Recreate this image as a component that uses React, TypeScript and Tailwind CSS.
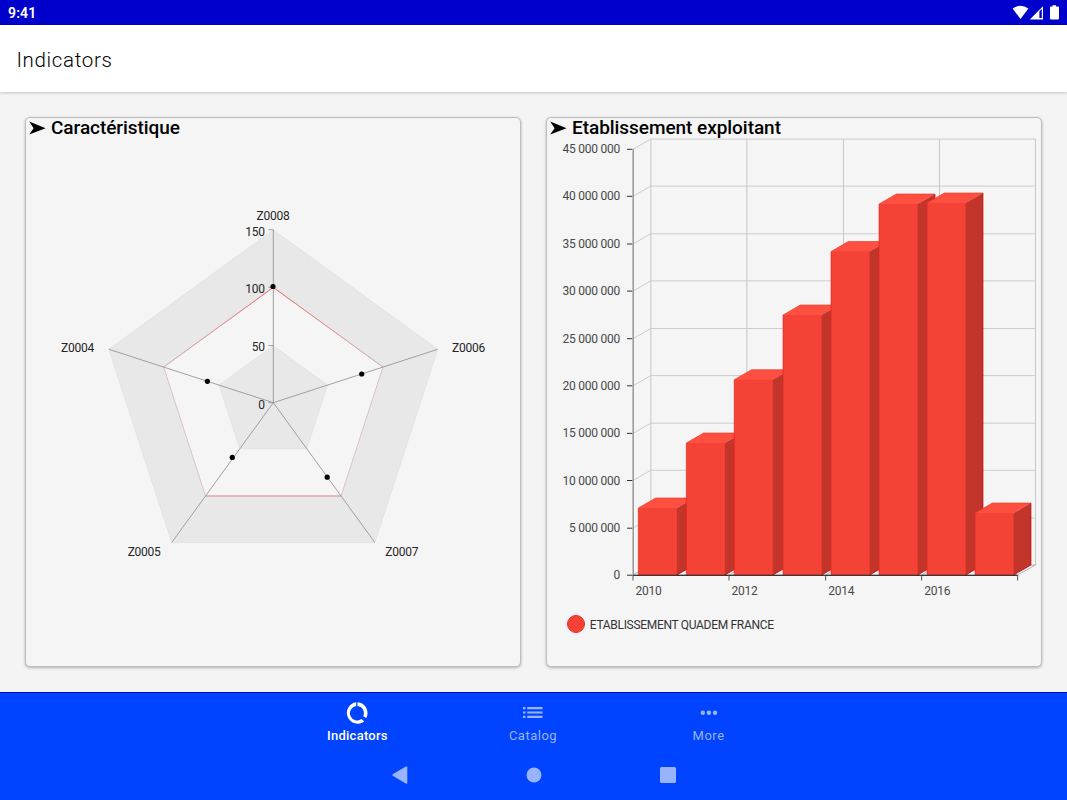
import React from "react";

const yAxis = [
  { label: "45 000 000", y: 149.3 },
  { label: "40 000 000", y: 196.3 },
  { label: "35 000 000", y: 244 },
  { label: "30 000 000", y: 291.1 },
  { label: "25 000 000", y: 338.7 },
  { label: "20 000 000", y: 385.8 },
  { label: "15 000 000", y: 433.4 },
  { label: "10 000 000", y: 480.5 },
  { label: "5 000 000", y: 528.2 },
  { label: "0", y: 575.2 },
];

const xAxis = [
  { label: "2010", x: 633 },
  { label: "2012", x: 729 },
  { label: "2014", x: 825.6 },
  { label: "2016", x: 921.6 },
  { label: "", x: 1017.6 },
];

const bars = [
  { x: 638.3, top: 508 },
  { x: 686.3, top: 443 },
  { x: 734.2, top: 379.7 },
  { x: 783, top: 315 },
  { x: 831, top: 251.5 },
  { x: 879, top: 204 },
  { x: 927, top: 203 },
  { x: 975, top: 513 },
];

const BAR_W = 38.6;
const DX = 17.3;
const DY = 10;
const BASE = 575;

const CX = 273.3;
const CY = 402.7;

function vertex(index: number, radius: number) {
  const a = ((-90 + index * 72) * Math.PI) / 180;
  return [CX + radius * Math.cos(a), CY + radius * Math.sin(a)];
}

function ring(radius: number) {
  return [0, 1, 2, 3, 4].map((i) => vertex(i, radius).join(",")).join(" ");
}

const radarLabels = [
  { text: "Z0008", x: 273, y: 219.8 },
  { text: "Z0006", x: 468.5, y: 352.3 },
  { text: "Z0007", x: 401.8, y: 556.3 },
  { text: "Z0005", x: 144.1, y: 556.3 },
  { text: "Z0004", x: 77.5, y: 352.3 },
];

const radarPoints = [
  [273, 286.5],
  [361.7, 374],
  [327.2, 477.2],
  [232.3, 457.4],
  [207.4, 381.3],
];

function Radar() {
  return (
    <svg
      width="494"
      height="528"
      viewBox="26 138 494 528"
      className="block text-[12px] tracking-[-0.25px]"
    >
      <polygon points={ring(172.8)} fill="#e8e8e8" stroke="#dedede" strokeWidth="0.7" />
      <polygon points={ring(115.3)} fill="#f5f5f5" stroke="#dcbcbc" strokeWidth="0.9" />
      <path
        d={`M${vertex(4, 115.3)} L${vertex(0, 115.3)} L${vertex(1, 115.3)}`}
        fill="none"
        stroke="url(#limit)"
        strokeWidth="0.9"
      />
      <path
        d={`M${vertex(2, 115.3)} L${vertex(3, 115.3)}`}
        stroke="#e09a9a"
        strokeWidth="1.2"
      />
      <defs>
        <linearGradient id="limit" gradientUnits="userSpaceOnUse" x1="0" y1="287" x2="0" y2="367">
          <stop offset="0" stopColor="#f06060" />
          <stop offset="1" stopColor="#d0b4b4" />
        </linearGradient>
      </defs>
      <polygon points={ring(56.9)} fill="#e8e8e8" stroke="#dedede" strokeWidth="0.7" />
      {[0, 1, 2, 3, 4].map((i) => {
        const [x, y] = vertex(i, 172.8);
        return <line key={i} x1={CX} y1={CY} x2={x} y2={y} stroke="#969696" strokeWidth="0.9" />;
      })}
      {[
        { t: "150", y: 229.7 },
        { t: "100", y: 287.3 },
        { t: "50", y: 345.5 },
        { t: "0", y: 402.7 },
      ].map((k) => (
        <g key={k.t}>
          <line x1="268.3" x2="273.3" y1={k.y} y2={k.y} stroke="#8c8c8c" strokeWidth="0.8" />
          <text x="264.7" y={k.y + 5.8} textAnchor="end" fill="#262626">
            {k.t}
          </text>
        </g>
      ))}
      {radarPoints.map(([x, y]) => (
        <circle key={x} cx={x} cy={y} r="2.6" fill="#000" />
      ))}
      {radarLabels.map((l) => (
        <text key={l.text} x={l.x} y={l.y} textAnchor="middle" fill="#262626">
          {l.text}
        </text>
      ))}
    </svg>
  );
}

function BarChart() {
  return (
    <svg
      width="494"
      height="472"
      viewBox="547 138 494 472"
      className="block text-[12px] tracking-[-0.25px]"
    >
      {yAxis.map((t) => (
        <g key={t.label}>
          {t.label !== "0" && (
            <path
              d={`M633 ${t.y}L650.7 ${t.y - 10.2}H1035.6`}
              fill="none"
              stroke="#cccccc"
              strokeWidth="1"
            />
          )}
          <line x1="627" x2="632.5" y1={t.y} y2={t.y} stroke="#333" strokeWidth="1" />
          <text x="620" y={t.y + 4} textAnchor="end" fill="#484848">
            {t.label}
          </text>
        </g>
      ))}
      {xAxis.map((t) => (
        <line
          key={t.x}
          x1={t.x + 17.9}
          x2={t.x + 17.9}
          y1="139"
          y2="565"
          stroke="#c8c8c8"
          strokeWidth="1"
        />
      ))}
      <path
        d="M633 575L650.7 565H1035.5L1017.6 575ZM729 575L746.7 565M825.6 575L843.4 565M921.6 575L939.4 565"
        fill="#f5f5f5"
        stroke="#aaa"
        strokeWidth="0.9"
      />
      <line x1="633.2" x2="633.2" y1="149" y2="575" stroke="#9c9c9c" strokeWidth="1.6" />
      {bars.map((b) => {
        const r = b.x + BAR_W;
        return (
          <g key={b.x}>
            <path
              d={`M${b.x} ${b.top + 1}V${b.top}L${b.x + DX} ${b.top - DY}H${r + DX}L${r} ${b.top}V${b.top + 1}Z`}
              fill="#ff4f41"
            />
            <path
              d={`M${b.x} ${b.top}L${b.x + DX} ${b.top - DY}H${r + DX}`}
              fill="none"
              stroke="#e8301f"
              strokeWidth="0.6"
            />
            <path
              d={`M${r - 1} ${b.top + 0.6}L${r + DX} ${b.top - DY}V${BASE - DY}L${r} ${BASE}H${r - 1}Z`}
              fill="#c3352b"
            />
            <path
              d={`M${r + DX} ${b.top - DY}V${BASE - DY}L${r} ${BASE}`}
              fill="none"
              stroke="#b80000"
              strokeWidth="0.8"
            />
            <rect x={b.x} y={b.top} width={BAR_W} height={BASE - b.top} fill="#f44336" />
            <line x1={b.x} x2={b.x} y1={b.top} y2={BASE} stroke="#dd2015" strokeWidth="0.6" />
          </g>
        );
      })}
      <line x1="633" x2="1017.6" y1="575.3" y2="575.3" stroke="#111" strokeWidth="1" />
      {xAxis.map((t) => (
        <g key={t.x}>
          <line x1={t.x} x2={t.x} y1="575" y2="580.5" stroke="#444" strokeWidth="0.9" />
          <text x={t.x + 2.6} y="594.8" fill="#484848">
            {t.label}
          </text>
        </g>
      ))}
    </svg>
  );
}

function Card({ title, children }: { title: string; children: React.ReactNode }) {
  return (
    <section className="flex h-[550px] w-[496px] flex-col rounded-[5px] border border-[#bdbdbd] bg-[#f5f5f5] shadow-[0_1px_3px_rgba(0,0,0,0.28)]">
      <h2 className="flex h-5 shrink-0 items-center gap-[5px] pl-[3px] text-[19px] font-medium leading-5 tracking-[-0.05px] text-black">
        <svg width="17" height="14" viewBox="0 0 17 14">
          <path d="M0.2 0.6L16.6 7.2L0.2 13.6L4.6 7.2Z" fill="#000" />
        </svg>
        {title}
      </h2>
      {children}
    </section>
  );
}

function Tab({ label, active, children }: { label: string; active?: boolean; children: React.ReactNode }) {
  return (
    <button
      className={`flex w-[175.6px] flex-col items-center text-[13px] leading-4 ${
        active
          ? "font-medium tracking-[0.25px] text-white"
          : "font-normal tracking-[0.5px] text-[#99b4ff]"
      }`}
    >
      <svg width="26" height="26" viewBox="0 0 26 26" fill="currentColor">
        {children}
      </svg>
      <span className="mt-[2px]">{label}</span>
    </button>
  );
}

export default function App() {
  return (
    <div className="flex h-[800px] w-[1067px] flex-col overflow-hidden bg-[#f4f4f4] font-['Roboto',sans-serif]">
      <div className="flex h-[24.5px] shrink-0 items-center justify-between bg-[#0000cc] pl-[8px] pr-[7px]">
        <span className="pt-[3px] text-[14px] font-semibold tracking-[0.15px] text-white">9:41</span>
        <svg width="48" height="16" viewBox="1012 4 48 16" fill="#fff">
          <path d="M1012.6 8.6Q1020.5 2.8 1028.4 8.6L1020.5 19Z" />
          <path d="M1043 6.3V19.4H1029.8Z" />
          <path d="M1039.4 11.2L1041.8 8.9V18H1039.4Z" fill="#0000cc" />
          <path d="M1052.5 5.2H1056V6.5H1058Q1059 6.5 1059 7.5V18.5Q1059 19.6 1058 19.6H1051Q1050 19.6 1050 18.5V7.5Q1050 6.5 1051 6.5H1052.5Z" />
        </svg>
      </div>
      <header className="z-10 flex h-[67px] shrink-0 items-center bg-white pl-[16.5px] pt-[4px] shadow-[0_1px_3px_rgba(0,0,0,0.2)]">
        <h1 className="text-[20.5px] font-light tracking-[0.65px] text-black">Indicators</h1>
      </header>
      <main className="flex h-[600px] shrink-0 items-start gap-[25px] px-[25px] pt-[25.5px]">
        <Card title="Caractéristique">
          <Radar />
        </Card>
        <Card title="Etablissement exploitant">
          <BarChart />
          <div className="flex h-7 items-center gap-[4.5px] pl-[20.3px] text-[12px] tracking-[-0.31px] text-[#333]">
            <span className="size-[18px] rounded-full border border-[#f02a20] bg-[#f44336]" />
            <span className="pt-px">ETABLISSEMENT QUADEM FRANCE</span>
          </div>
        </Card>
      </main>
      <footer className="flex h-[109px] shrink-0 flex-col border-t border-[#0000cc] bg-[#0044ff]">
        <nav className="flex justify-center pr-px pt-[7px]">
          <Tab label="Indicators" active>
            <path d="M12.2 2.2V5.9A7.3 7.3 0 1 0 17.6 19L20.2 21.5A10.8 10.8 0 1 1 12.2 2.2ZM13.5 2.2A10.8 10.8 0 0 1 22.3 18L19.2 16.2A7.3 7.3 0 0 0 13.5 5.9Z" />
          </Tab>
          <Tab label="Catalog">
            <path d="M3 7h2.5v2.2h-2.5zM3 11.4h2.5v2.2h-2.5zM3 15.8h2.5v2.2h-2.5zM7.2 7h15.3v2.2h-15.3zM7.2 11.4h15.3v2.2h-15.3zM7.2 15.8h15.3v2.2h-15.3z" />
          </Tab>
          <Tab label="More">
            <circle cx="6.8" cy="12.7" r="2.2" />
            <circle cx="12.9" cy="12.7" r="2.2" />
            <circle cx="19" cy="12.7" r="2.2" />
          </Tab>
        </nav>
        <div className="mt-[22px] flex justify-center gap-[118px]">
          <svg width="16" height="18" viewBox="0 0 16 18" fill="#99b4ff">
            <path d="M0.7 8.3Q0 9 0.7 9.7L13.8 17.5Q15.3 18 15.3 16.7V1.3Q15.3 0 13.8 0.6Z" />
          </svg>
          <svg width="16" height="18" viewBox="0 0 16 18" fill="#99b4ff">
            <circle cx="8" cy="9" r="7.5" />
          </svg>
          <svg width="16" height="18" viewBox="0 0 16 18" fill="#99b4ff">
            <rect x="0" y="1" width="16" height="16" rx="1.5" />
          </svg>
        </div>
      </footer>
    </div>
  );
}
